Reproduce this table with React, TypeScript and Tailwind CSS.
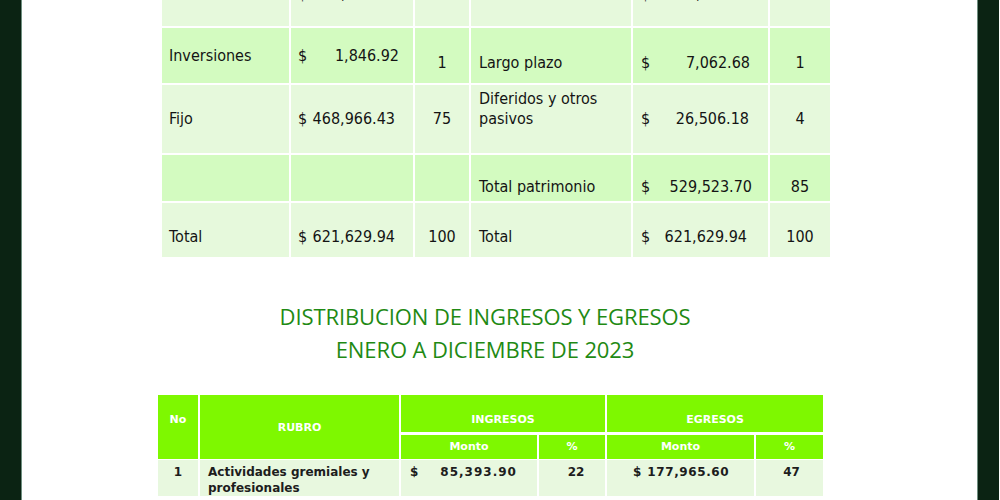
import React from "react";

const topFont = "font-['DejaVu_Sans',sans-serif] [font-stretch:condensed] text-[16px] text-[#141414]";

function Money({ v }: { v: string }) {
  return (
    <div className="flex w-full justify-between">
      <span>$</span>
      <span>{v}</span>
    </div>
  );
}

export default function App() {
  const light = "bg-[#e6f9dc]";
  const bright = "bg-[#d3fbc0]";
  return (
    <div className="flex h-[500px] w-[1000px] overflow-hidden bg-white">
      <div className="w-[22px] shrink-0 border-r border-[#6f8f80] bg-[#0b2313]" />
      <main className="flex w-[955px] shrink-0 flex-col">
        {/* Balance table */}
        <div
          className={`-mt-[40px] ml-[140px] grid w-[668px] grid-cols-[127px_122px_54px_160px_135px_60px] gap-[2px] ${topFont}`}
        >
          {/* row 1 (cut off) */}
          <div className={`h-[66px] ${light} pl-[7px] pt-[24px] leading-[20px]`}>Circulante</div>
          <div className={`h-[66px] ${light} pl-[7px] pr-[17px] pt-[24px] leading-[20px]`}>
            <Money v="150,816.59" />
          </div>
          <div className={`h-[66px] ${light} pt-[24px] text-center leading-[20px]`}>24</div>
          <div className={`h-[66px] ${light} pl-[8px] pt-[24px] leading-[20px]`}>Circulante</div>
          <div className={`h-[66px] ${light} pl-[8px] pr-[17px] pt-[24px] leading-[20px]`}>
            <Money v="58,537.38" />
          </div>
          <div className={`h-[66px] ${light} pt-[24px] text-center leading-[20px]`}>10</div>

          {/* row 2 */}
          <div className={`flex h-[55px] items-center ${bright} pl-[7px]`}>Inversiones</div>
          <div className={`flex h-[55px] items-center ${bright} pl-[7px] pr-[14px]`}>
            <Money v="1,846.92" />
          </div>
          <div className={`flex h-[55px] items-center justify-center ${bright} pt-[14px]`}>1</div>
          <div className={`flex h-[55px] items-center ${bright} pl-[8px] pt-[14px]`}>Largo plazo</div>
          <div className={`flex h-[55px] items-center ${bright} pl-[8px] pr-[18px] pt-[14px]`}>
            <Money v="7,062.68" />
          </div>
          <div className={`flex h-[55px] items-center justify-center ${bright} pt-[14px]`}>1</div>

          {/* row 3 */}
          <div className={`flex h-[68px] items-center ${light} pl-[7px]`}>Fijo</div>
          <div className={`flex h-[68px] items-center ${light} pl-[7px] pr-[18px]`}>
            <Money v="468,966.43" />
          </div>
          <div className={`flex h-[68px] items-center justify-center ${light}`}>75</div>
          <div className={`flex h-[68px] items-center ${light} pb-[20px] pl-[8px] leading-[20px]`}>
            Diferidos y otros
            <br />
            pasivos
          </div>
          <div className={`flex h-[68px] items-center ${light} pl-[8px] pr-[19px]`}>
            <Money v="26,506.18" />
          </div>
          <div className={`flex h-[68px] items-center justify-center ${light}`}>4</div>

          {/* row 4 */}
          <div className={`h-[46px] ${bright}`} />
          <div className={`h-[46px] ${bright}`} />
          <div className={`h-[46px] ${bright}`} />
          <div className={`flex h-[46px] items-center ${bright} pl-[8px] pt-[18px]`}>Total patrimonio</div>
          <div className={`flex h-[46px] items-center ${bright} pl-[8px] pr-[16px] pt-[18px]`}>
            <Money v="529,523.70" />
          </div>
          <div className={`flex h-[46px] items-center justify-center ${bright} pt-[18px]`}>85</div>

          {/* row 5 */}
          <div className={`flex h-[54px] items-center ${light} pl-[7px] pt-[14px]`}>Total</div>
          <div className={`flex h-[54px] items-center ${light} pl-[7px] pr-[18px] pt-[14px]`}>
            <Money v="621,629.94" />
          </div>
          <div className={`flex h-[54px] items-center justify-center ${light} pt-[14px]`}>100</div>
          <div className={`flex h-[54px] items-center ${light} pl-[8px] pt-[14px]`}>Total</div>
          <div className={`flex h-[54px] items-center ${light} pl-[8px] pr-[21px] pt-[14px]`}>
            <Money v="621,629.94" />
          </div>
          <div className={`flex h-[54px] items-center justify-center ${light} pt-[14px]`}>100</div>
        </div>

        {/* Title */}
        <div className="mt-[43px] w-[926px] text-center font-['Open_Sans',sans-serif] text-[22px] leading-[33px] tracking-[-0.1px] text-[#1f8a14]">
          DISTRIBUCION DE INGRESOS Y EGRESOS
          <br />
          ENERO A DICIEMBRE DE 2023
        </div>

        {/* Income / expense table */}
        <div className="ml-[136px] mt-[29px] grid w-[665px] grid-cols-[40px_199px_136px_66px_147px_67px] gap-x-[2px] font-['DejaVu_Sans',sans-serif] font-bold">
          <div className="row-span-2 flex h-[64px] justify-center bg-[#7ef800] pt-[17px] text-[11px] text-white">
            No
          </div>
          <div className="row-span-2 flex h-[64px] items-center justify-center bg-[#7ef800] pt-[3px] text-[11px] text-white">
            RUBRO
          </div>
          <div className="col-span-2 flex h-[37px] items-center justify-center bg-[#7ef800] pt-[14px] text-[11px] text-white">
            INGRESOS
          </div>
          <div className="col-span-2 flex h-[37px] items-center justify-center bg-[#7ef800] pt-[13px] text-[11px] text-white">
            EGRESOS
          </div>
          <div className="mt-[3px] flex h-[24px] items-center justify-center bg-[#7ef800] text-[11px] text-white">
            Monto
          </div>
          <div className="mt-[3px] flex h-[24px] items-center justify-center bg-[#7ef800] text-[11px] text-white">
            %
          </div>
          <div className="mt-[3px] flex h-[24px] items-center justify-center bg-[#7ef800] text-[11px] text-white">
            Monto
          </div>
          <div className="mt-[3px] flex h-[24px] items-center justify-center bg-[#7ef800] text-[11px] text-white">
            %
          </div>

          <div className="mt-[1px] h-[36px] bg-[#e8f8df] pt-[4px] text-center text-[12px] leading-[16px] text-[#1d1d1d]">
            1
          </div>
          <div className="mt-[1px] h-[36px] bg-[#e8f8df] pl-[8px] pt-[4px] text-[12px] leading-[16px] text-[#1d1d1d]">
            Actividades gremiales y
            <br />
            profesionales
          </div>
          <div className="mt-[1px] flex h-[36px] bg-[#e8f8df] pl-[9px] pt-[4px] text-[12px] leading-[16px] text-[#1d1d1d]">
            <span>$</span>
            <span className="ml-[22px] tracking-[1px]">85,393.90</span>
          </div>
          <div className="mt-[1px] h-[36px] bg-[#e8f8df] pl-[8px] pt-[4px] text-center text-[12px] leading-[16px] text-[#1d1d1d]">
            22
          </div>
          <div className="mt-[1px] flex h-[36px] bg-[#e8f8df] pl-[26px] pt-[4px] text-[12px] leading-[16px] text-[#1d1d1d]">
            <span>$</span>
            <span className="ml-[6px] tracking-[0.6px]">177,965.60</span>
          </div>
          <div className="mt-[1px] h-[36px] bg-[#e8f8df] pl-[4px] pt-[4px] text-center text-[12px] leading-[16px] text-[#1d1d1d]">
            47
          </div>
        </div>
      </main>
      <div className="w-[23px] shrink-0 border-l border-r border-l-[#6f8f80] border-r-white bg-[#0b2313]" />
    </div>
  );
}
